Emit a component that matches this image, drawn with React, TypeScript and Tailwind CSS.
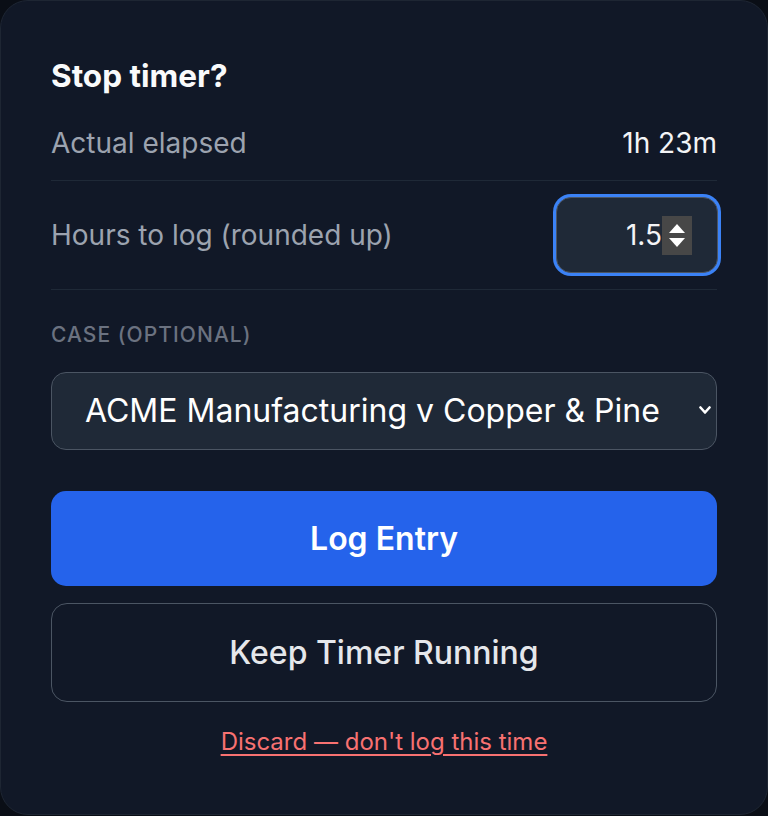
import React from "react";

function Spinner() {
  return (
    <div className="flex h-[39px] w-[30px] flex-col items-center justify-center gap-[5px] bg-[#474747]">
      <svg width="16" height="9" viewBox="0 0 16 9">
        <path d="M8 0 L16 9 L0 9 Z" fill="#ffffff" />
      </svg>
      <svg width="16" height="9" viewBox="0 0 16 9">
        <path d="M0 0 L16 0 L8 9 Z" fill="#ffffff" />
      </svg>
    </div>
  );
}

export default function App() {
  return (
    <div
      className="h-[816px] w-[768px] bg-[#0a0e16]"
      style={{ fontFamily: "Inter, 'Noto Sans', sans-serif" }}
    >
      <div className="flex h-[815px] w-[768px] flex-col rounded-[28px] border border-[#1e2633] bg-[#111827] px-[50px] pt-[55px]">
        <h2 className="text-[31.5px] font-bold leading-[40px] text-[#f9fafb]">Stop timer?</h2>

        <div className="mt-[10px] flex items-center justify-between border-b border-[#1f2937] py-[22px]">
          <span className="text-[28px] leading-[30px] text-[#9ca3af]">Actual elapsed</span>
          <span className="text-[28px] leading-[30px] text-[#f3f4f6]">1h 23m</span>
        </div>

        <div className="flex items-center justify-between border-b border-[#1f2937] py-[16px]">
          <span className="text-[28px] leading-[30px] text-[#9ca3af]">Hours to log (rounded up)</span>
          <div className="mr-[-1px] flex h-[76px] w-[162px] items-center justify-end rounded-[15px] border border-[#4b5563] bg-[#1f2937] pr-[25px] ring-[3px] ring-[#3b82f6]">
            <span className="text-[28px] leading-[30px] text-[#f3f4f6]">1.5</span>
            <Spinner />
          </div>
        </div>

        <div className="mt-[30px] text-[21px] font-medium uppercase leading-[30px] tracking-[0.05em] text-[#6b7280]">
          Case (optional)
        </div>

        <div className="relative mt-[22px]">
          <select
            defaultValue="acme"
            className="h-[78px] w-full appearance-none rounded-[15px] border border-[#4b5563] bg-[#1f2937] pl-[33px] text-[32px] text-white outline-none"
            style={{ fontFamily: "Inter, 'Noto Sans', sans-serif" }}
          >
            <option value="acme">ACME Manufacturing v Copper &amp; Pine</option>
          </select>
          <svg
            className="pointer-events-none absolute right-[6px] top-[34px]"
            width="12"
            height="9"
            viewBox="0 0 12 9"
          >
            <path d="M1.5 1.5 L6 6.5 L10.5 1.5" fill="none" stroke="#ffffff" strokeWidth="2.6" strokeLinecap="round" strokeLinejoin="round" />
          </svg>
        </div>

        <button className="mt-[41px] h-[95px] w-full rounded-[15px] bg-[#2563eb] text-[32px] font-semibold text-white">
          Log Entry
        </button>

        <button className="mt-[17px] h-[99px] w-full rounded-[16px] border border-[#4b5563] text-[32px] font-medium text-[#e5e7eb]">
          Keep Timer Running
        </button>

        <div className="mt-[23px] flex justify-center">
          <a className="cursor-pointer text-[24px] leading-[34px] text-[#f87171] underline underline-offset-[4px]">
            Discard — don't log this time
          </a>
        </div>
      </div>
    </div>
  );
}
